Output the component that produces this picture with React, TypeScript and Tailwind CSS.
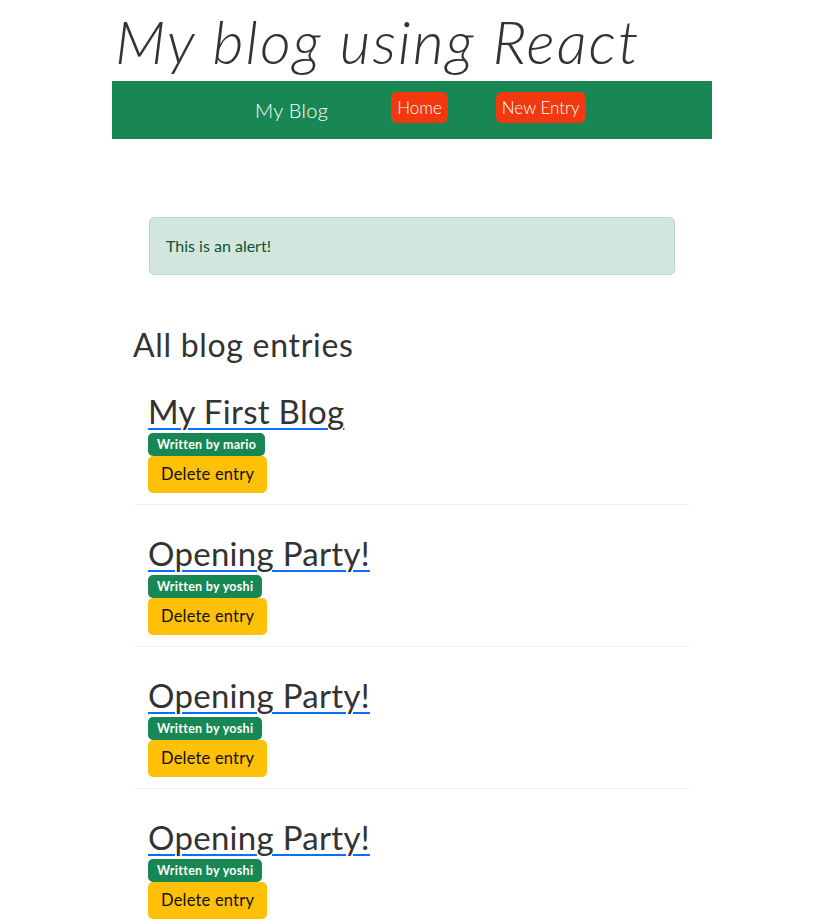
const entries = [
  { title: "My First Blog", author: "mario" },
  { title: "Opening Party!", author: "yoshi" },
  { title: "Opening Party!", author: "yoshi" },
  { title: "Opening Party!", author: "yoshi" },
];

function EntryItem({ title, author }: { title: string; author: string }) {
  return (
    <li className="flex flex-col items-start border-b border-[#f2f2f2] pl-[13px] pt-[29px] pb-[11px]">
      <a
        href="#"
        className="text-[33px] leading-[38px] tracking-[0.3px] text-[#333] underline decoration-[#0d6efd] decoration-[1.5px] underline-offset-[4px]"
      >
        {title}
      </a>
      <span className="mt-[3px] rounded-[5px] bg-[#198754] px-[9px] py-[4px] text-[12.5px] font-bold leading-[15px] tracking-[0.3px] text-white">
        Written by {author}
      </span>
      <button className="rounded-[5px] bg-[#ffc107] px-[13px] py-[6px] text-[16.5px] leading-[25px] tracking-[0.2px] text-[#111]">
        Delete entry
      </button>
    </li>
  );
}

export default function App() {
  return (
    <div className="min-h-screen w-[824px] bg-white font-['Lato',sans-serif] text-[#333]">
      <div className="mx-auto w-[600px]">
        <h1 className="h-[81px] pl-[3px] pt-[6px] text-[60px] font-light italic leading-[70px] tracking-[2px]">
          My blog using React
        </h1>
        <nav className="flex h-[58px] items-start bg-[#198754] pl-[143px]">
          <span className="mt-[15px] text-[20px] font-light leading-[28px] tracking-[0.3px] text-white">My Blog</span>
          <a href="#" className="ml-[63px] mt-[11px] rounded-[6px] bg-[#f2380f] px-[6px] py-[3px] text-[17px] font-light leading-[25px] text-white">
            Home
          </a>
          <a href="#" className="ml-[48px] mt-[11px] rounded-[6px] bg-[#f2380f] px-[6px] py-[3px] text-[17px] font-light leading-[25px] text-white">
            New Entry
          </a>
        </nav>
        <div className="mx-[37px] mt-[78px] rounded-[5px] border border-[#badbcc] bg-[#d1e7dd] px-[16px] py-[16px] text-[16px] leading-[24px] text-[#0f5132]">
          This is an alert!
        </div>
        <h2 className="mt-[52px] pl-[21px] text-[32px] leading-[36px] tracking-[0.7px]">All blog entries</h2>
        <ul className="mx-[23px]">
          {entries.map((e, i) => (
            <EntryItem key={i} title={e.title} author={e.author} />
          ))}
        </ul>
      </div>
    </div>
  );
}
